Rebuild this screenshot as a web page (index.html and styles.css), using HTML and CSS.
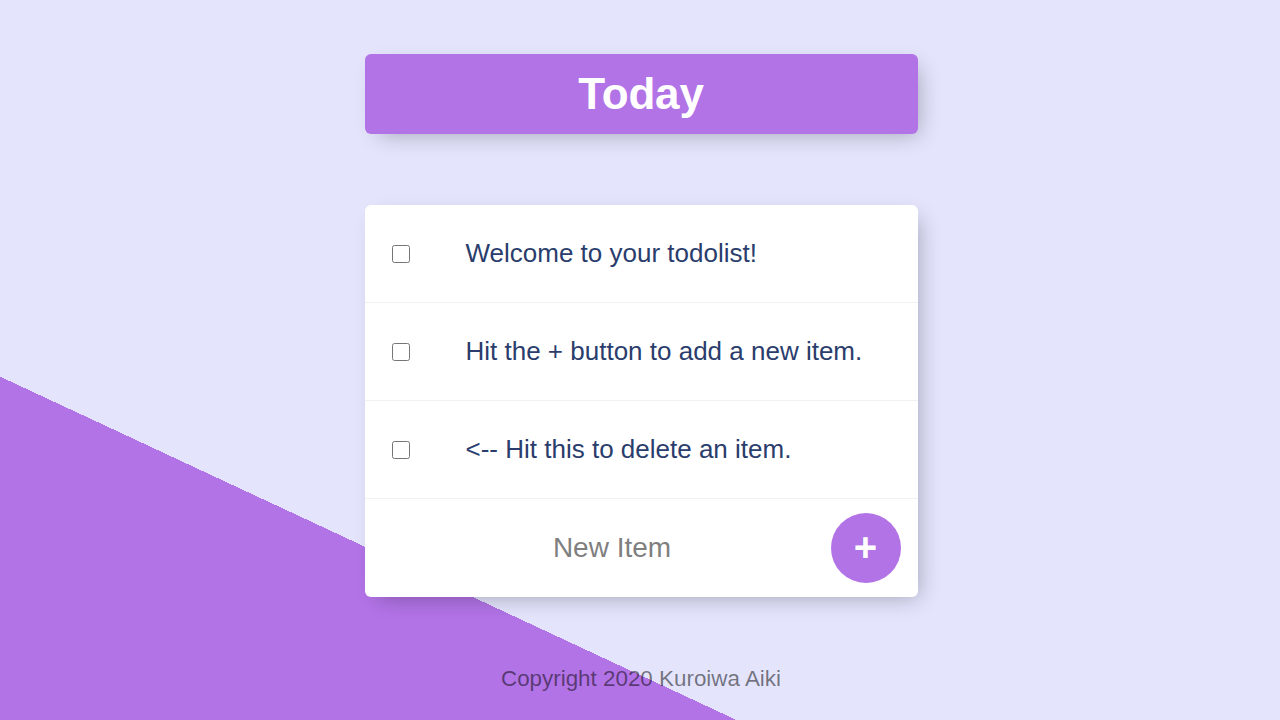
FILE: index.html
```html
<!DOCTYPE html>
<html lang="en">
<head>
<meta charset="utf-8">
<title>To-Do List</title>
<link rel="stylesheet" href="styles.css">
</head>
<body>
  <div class="box heading">
    <h1 class="title">Today</h1>
  </div>
  <div class="box list">
    <div class="item">
      <input class="check" type="checkbox">
      <p class="item-text">Welcome to your todolist!</p>
    </div>
    <div class="item">
      <input class="check" type="checkbox">
      <p class="item-text">Hit the + button to add a new item.</p>
    </div>
    <div class="item">
      <input class="check" type="checkbox">
      <p class="item-text">&lt;-- Hit this to delete an item.</p>
    </div>
    <form class="item add-form">
      <input class="new-item" type="text" name="newItem" placeholder="New Item" autocomplete="off">
      <button class="add-btn" type="button">+</button>
    </form>
  </div>
  <footer class="footer">Copyright 2020 Kuroiwa Aiki</footer>
</body>
</html>
```

FILE: styles.css
```css
html {
  background-color: #e4e5fd;
  background-image: linear-gradient(25deg, #b273e6 50%, #e4e5fd 50%);
  background-size: 1280px 1350px;
  background-repeat: no-repeat;
  min-height: 100%;
}

body {
  margin: 0;
  font-family: "Liberation Sans", Arial, sans-serif;
  display: flex;
  flex-direction: column;
  align-items: center;
  padding: 54px 0 0 2px;
}

.box {
  width: 553px;
  border-radius: 6px;
  box-shadow: 7px 7px 21px -7px rgba(0, 0, 0, 0.3);
}

.heading {
  background-color: #b273e6;
  height: 80px;
  display: flex;
  align-items: center;
  justify-content: center;
}

.title {
  margin: 0;
  color: #fff;
  font-size: 44px;
  font-weight: bold;
  letter-spacing: -0.2px;
  line-height: 1;
}

.list {
  margin-top: 71px;
  background: #fff;
}

.item {
  height: 97px;
  display: flex;
  align-items: center;
  border-bottom: 1px solid #f1f1f1;
}

.item:last-child {
  border-bottom: 0;
  height: 98px;
}

.check {
  width: 18px;
  height: 18px;
  margin: 0 0 0 27px;
  flex: none;
}

.item-text {
  margin: 0 0 0 56px;
  font-size: 26px;
  color: #2a3d6c;
  white-space: nowrap;
}

.add-form {
  margin: 0;
}

.new-item {
  margin-left: 31px;
  width: 433px;
  height: 83px;
  border: none;
  background: transparent;
  text-align: center;
  font-family: "Liberation Sans", Arial, sans-serif;
  font-size: 28px;
  padding: 0;
  color: #333;
}

.new-item::placeholder {
  color: #7f7f7f;
  opacity: 1;
}

.new-item:focus {
  outline: none;
}

.add-btn {
  margin-left: 2px;
  width: 70px;
  height: 70px;
  border-radius: 50%;
  border: 0;
  background-color: #b273e6;
  color: #fff;
  font-family: "Liberation Sans", Arial, sans-serif;
  font-size: 40px;
  font-weight: bold;
  line-height: 1;
  padding: 0 0 2px 0;
  display: flex;
  align-items: center;
  justify-content: center;
}

.footer {
  margin-top: 67px;
  color: rgba(0, 0, 0, 0.5);
  font-size: 22.4px;
  line-height: 30px;
  text-align: center;
}
```
